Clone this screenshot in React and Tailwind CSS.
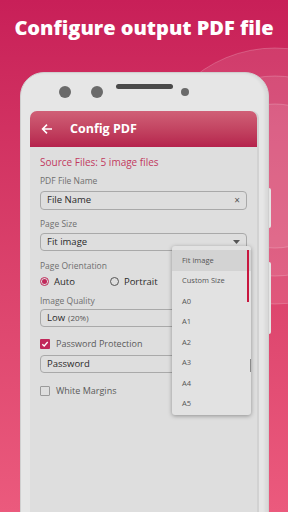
import React from "react";

function Rings() {
  return (
    <svg className="absolute left-0 top-0" width="288" height="512" viewBox="0 0 288 512">
      <circle cx="275" cy="176" r="128" fill="#ffffff" fillOpacity="0.1" stroke="#ffffff" strokeOpacity="0.2" />
      <circle cx="275" cy="176" r="100" fill="#ffffff" fillOpacity="0.08" stroke="#ffffff" strokeOpacity="0.2" />
      <circle cx="275" cy="176" r="72" fill="#ffffff" fillOpacity="0.08" stroke="#ffffff" strokeOpacity="0.2" />
    </svg>
  );
}

function Label({ children }) {
  return <div className="text-[8.5px] text-[#6f6f6f] leading-none">{children}</div>;
}

function Box({ children, className = "" }) {
  return (
    <div className={"h-[18px] rounded-[4px] border border-[#a9a9a9] flex items-center px-[6px] text-[9.5px] text-[#2a2a2a] " + className}>
      {children}
    </div>
  );
}

function Check({ on }) {
  return on ? (
    <div className="w-[10px] h-[10px] rounded-[1px] bg-[#c1285a] flex items-center justify-center">
      <svg width="8" height="8" viewBox="0 0 8 8">
        <path d="M1.3 4.2 L3.2 6 L6.7 2" stroke="#fff" strokeWidth="1.3" fill="none" />
      </svg>
    </div>
  ) : (
    <div className="w-[10px] h-[10px] rounded-[1px] border border-[#9a9a9a]" />
  );
}

const sizes = ["Fit image", "Custom Size", "A0", "A1", "A2", "A3", "A4", "A5"];

export default function App() {
  return (
    <div
      className="relative w-[288px] h-[512px] overflow-hidden bg-gradient-to-b from-[#c81f58] to-[#eb5a7d]"
      style={{ fontFamily: "'Open Sans', 'Liberation Sans', sans-serif" }}
    >
      <Rings />
      <div className="relative pt-[14px] text-center text-white text-[20px] font-extrabold leading-[28px]">
        Configure output PDF file
      </div>

      <div className="relative ml-[20px] mt-[30px] w-[249px] h-[460px] rounded-t-[24px] bg-[#e6e6e6] border border-[#cfcfcf] shadow-[inset_-3px_0_3px_rgba(0,0,0,0.06)] px-[9px]">
        <div className="absolute -right-[3px] top-[115px] w-[2px] h-[40px] rounded-r bg-[#e4e4e4]" />
        <div className="absolute -right-[3px] top-[189px] w-[2px] h-[72px] rounded-r bg-[#e4e4e4]" />

        <div className="h-[38px] flex items-center">
          <div className="w-[12px] h-[12px] rounded-full bg-[#6a6a6a] ml-[29px]" />
          <div className="w-[12px] h-[12px] rounded-full bg-[#6a6a6a] ml-[20px]" />
          <div className="w-[57px] h-[5px] rounded-full bg-[#4a4a4a] ml-[13px] -mt-[12px]" />
          <div className="w-[8px] h-[8px] rounded-full bg-[#6a6a6a] ml-[8px]" />
        </div>

        <div className="h-full bg-[#dedede] rounded-t-[7px] border-r-2 border-[#d2d2d2]">
          <div className="h-[36px] rounded-t-[7px] bg-gradient-to-b from-[#d06077] to-[#b5224d] flex items-center px-[11px] text-white">
            <svg width="12" height="12" viewBox="0 0 12 12">
              <path d="M11 6 H1.8 M6 1.6 L1.6 6 L6 10.4" stroke="#fff" strokeWidth="1.6" fill="none" />
            </svg>
            <span className="ml-[17px] text-[12.5px] font-bold">Config PDF</span>
          </div>

          <div className="relative px-[10px] pt-[10px]">
            <div className="text-[10px] text-[#c2395f] leading-none">Source Files: 5 image files</div>

            <div className="mt-[10px]"><Label>PDF File Name</Label></div>
            <Box className="mt-[5px] justify-between h-[19px]">
              <span>File Name</span>
              <span className="text-[#555] text-[10px]">×</span>
            </Box>

            <div className="mt-[10px]"><Label>Page Size</Label></div>
            <Box className="mt-[5px] justify-between border-[#8e9ed9]">
              <span>Fit image</span>
              <svg width="7" height="4" viewBox="0 0 7 4"><path d="M0 0 H7 L3.5 4 Z" fill="#555" /></svg>
            </Box>

            <div className="mt-[11px]"><Label>Page Orientation</Label></div>
            <div className="mt-[4px] flex items-center text-[9.5px] text-[#2a2a2a]">
              <div className="w-[9px] h-[9px] rounded-full border border-[#c1285a] flex items-center justify-center">
                <div className="w-[5px] h-[5px] rounded-full bg-[#c1285a]" />
              </div>
              <span className="ml-[5px]">Auto</span>
              <div className="ml-[35px] w-[9px] h-[9px] rounded-full border border-[#555]" />
              <span className="ml-[5px]">Portrait</span>
            </div>

            <div className="mt-[8px]"><Label>Image Quality</Label></div>
            <Box className="mt-[4px] h-[17px]">
              <span>Low</span>
              <span className="ml-[3px] text-[8px] text-[#555]">(20%)</span>
            </Box>

            <div className="mt-[10px] flex items-center">
              <Check on />
              <span className="ml-[6px] text-[9px] text-[#5a5a5a]">Password Protection</span>
            </div>
            <Box className="mt-[4px] h-[17px]">
              <span>Password</span>
            </Box>

            <div className="mt-[11px] flex items-center">
              <Check />
              <span className="ml-[6px] text-[9px] text-[#5a5a5a]">White Margins</span>
            </div>

            <div className="absolute left-[142px] top-[99px] w-[79px] h-[169px] rounded-[3px] bg-[#e2e2e2] shadow-[0_1px_4px_rgba(0,0,0,0.35)] py-[4px]">
              {sizes.map((s, i) => (
                <div
                  key={s}
                  className={"h-[20.5px] flex items-center pl-[10px] text-[7.5px] text-[#555] " + (i === 0 ? "bg-[#d3d3d3]" : "")}
                >
                  {s}
                </div>
              ))}
              <div className="absolute right-[2px] top-[4px] w-[2px] h-[52px] bg-[#c8173f]" />
              <div className="absolute right-[0px] top-[113px] w-[1px] h-[13px] bg-[#8a8a8a]" />
            </div>
          </div>
        </div>
      </div>
    </div>
  );
}
